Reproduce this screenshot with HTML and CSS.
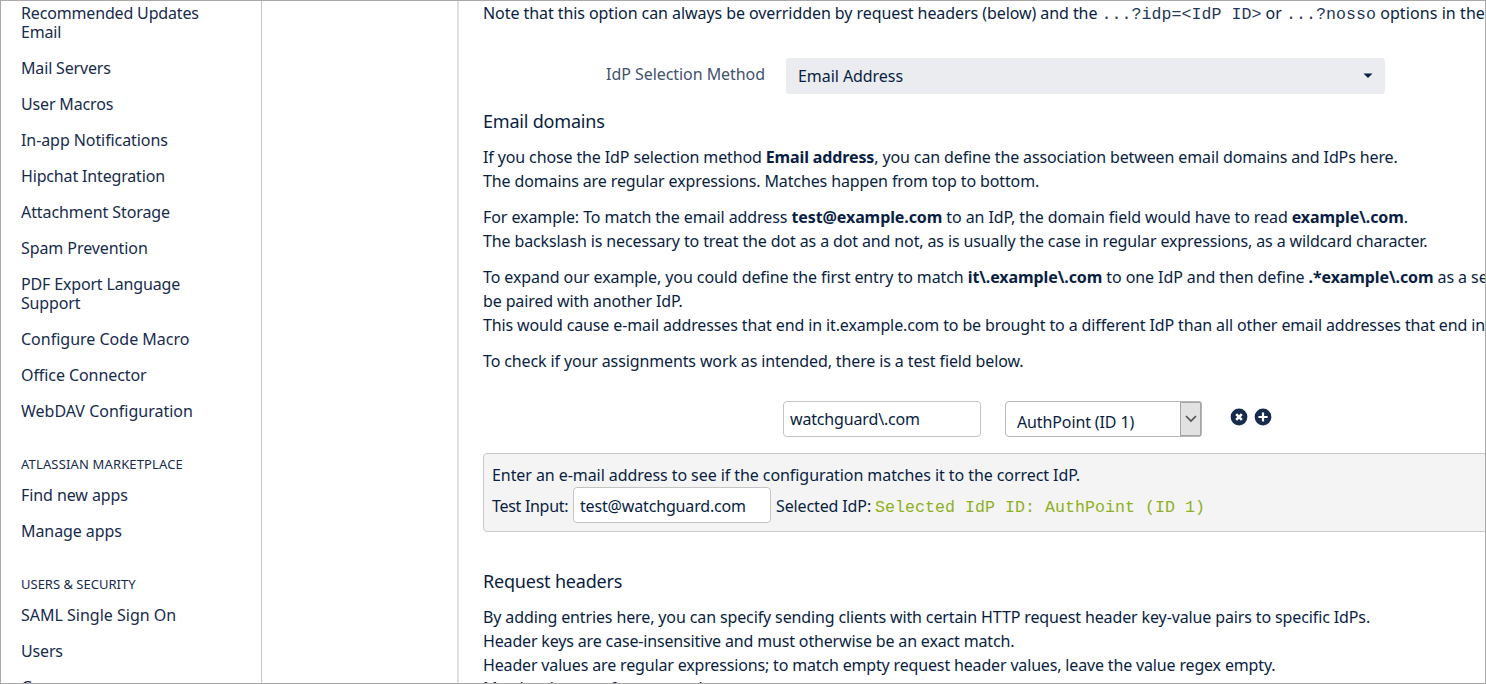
FILE: index.html
```html
<!DOCTYPE html>
<html lang="en">
<head>
<meta charset="utf-8">
<title>SAML Single Sign On</title>
<link rel="stylesheet" href="styles.css">
</head>
<body>
<div class="frame">
  <nav class="sidebar">
    <ul class="nav-list">
      <li class="tight">Recommended Updates<br>Email</li>
      <li class="tight">Mail Servers</li>
      <li class="tight">User Macros</li>
      <li>In-app Notifications</li>
      <li class="tight">Hipchat Integration</li>
      <li>Attachment Storage</li>
      <li>Spam Prevention</li>
      <li class="tight">PDF Export Language<br>Support</li>
      <li class="normal">Configure Code Macro</li>
      <li>Office Connector</li>
      <li class="normal">WebDAV Configuration</li>
    </ul>
    <h4 class="nav-title wide">ATLASSIAN MARKETPLACE</h4>
    <ul class="nav-list">
      <li>Find new apps</li>
      <li>Manage apps</li>
    </ul>
    <h4 class="nav-title">USERS &amp; SECURITY</h4>
    <ul class="nav-list">
      <li class="normal">SAML Single Sign On</li>
      <li class="tight">Users</li>
      <li>Groups</li>
    </ul>
  </nav>
  <div class="gutter"></div>
  <main class="content">
    <p class="note">Note that this option can always be overridden by request headers (below) and the <code>...?idp=&lt;IdP ID&gt;</code> <span class="joiner">or</span> <code>...?nosso</code> <span class="joiner">options in the</span></p>
    <div class="field-row">
      <label class="field-label">IdP Selection Method</label>
      <div class="select"><span>Email Address</span><svg width="10" height="6" viewBox="0 0 10 6"><path d="M0.5 0.5h9L5 5z" fill="#091e42"/></svg></div>
    </div>
    <h3>Email domains</h3>
    <p>If you chose the IdP selection method <b>Email address</b>, you can define the association between email domains and IdPs here.<br>The domains are regular expressions. Matches happen from top to bottom.</p>
    <p><span class="loose">For example: To match the email address <b>test@example.com</b> to an IdP, the domain field would have to read <b>example\.com</b>.</span><br>The backslash is necessary to treat the dot as a dot and not, as is usually the case in regular expressions, as a wildcard character.</p>
    <p><span class="loose">To expand our example, you could define the first entry to match <b>it\.example\.com</b> to one IdP and then define <b>.*example\.com</b> as a second</span><br>be paired with another IdP.<br>This would cause e-mail addresses that end in it.example.com to be brought to a different IdP than all other email addresses that end in</p>
    <p>To check if your assignments work as intended, there is a test field below.</p>
    <div class="domain-row">
      <div class="input">watchguard\.com</div>
      <div class="native-select"><span>AuthPoint (ID 1)</span><div class="native-arrow"><svg width="12" height="8" viewBox="0 0 12 8"><path d="M1 1l5 5 5-5" fill="none" stroke="#505050" stroke-width="1.6"/></svg></div></div>
      <div class="actions">
        <svg width="18" height="18" viewBox="0 0 18 18"><circle cx="9" cy="9" r="8.4" fill="#172b4d"/><path d="M6.2 6.2l5.6 5.6M11.8 6.2l-5.6 5.6" stroke="#fff" stroke-width="2.6"/></svg>
        <svg width="18" height="18" viewBox="0 0 18 18"><circle cx="9" cy="9" r="8.4" fill="#172b4d"/><path d="M9 4.4v9.2M4.4 9h9.2" stroke="#fff" stroke-width="2.2"/></svg>
      </div>
    </div>
    <section class="test-box">
      <div class="test-hint">Enter an e-mail address to see if the configuration matches it to the correct IdP.</div>
      <div class="test-line"><span class="test-label">Test Input:</span><div class="input">test@watchguard.com</div><span class="test-result">Selected IdP:</span><code>Selected IdP ID: AuthPoint (ID 1)</code></div>
    </section>
    <h3>Request headers</h3>
    <p>By adding entries here, you can specify sending clients with certain HTTP request header key-value pairs to specific IdPs.<br><span class="tight">Header keys are case-insensitive and must otherwise be an exact match.</span><br><span class="tight">Header values are regular expressions; to match empty request header values, leave the value regex empty.</span><span class="last-line">Matches happen from top to bottom.</span></p>
  </main>
</div>
</body>
</html>
```
FILE: styles.css
```css
* { box-sizing: border-box; margin: 0; padding: 0; }
body {
  width: 1486px;
  height: 684px;
  overflow: hidden;
  background: #fff;
  color: #091e42;
  font: 16px/24px "Noto Sans", sans-serif;
  letter-spacing: -0.125px;
}
.frame {
  display: flex;
  width: 1486px;
  height: 684px;
  overflow: hidden;
  border: 1px solid #a9a9a9;
}
.sidebar { flex: none; width: 261px; padding: 3px 0 0 20px; border-right: 1px solid #c4c4c4; line-height: 19px; letter-spacing: -0.08px; color: #172b4d; }
.nav-list { list-style: none; display: flex; flex-direction: column; gap: 17px; }
.nav-title { height: 16px; margin: 35px 0 14px; font-size: 13px; line-height: 16px; font-weight: 400; letter-spacing: 0; }
.wide { letter-spacing: 0.15px; }
.normal { letter-spacing: 0; }
.loose { letter-spacing: -0.09px; }
.tight { letter-spacing: -0.16px; }
.gutter { flex: none; width: 197px; border-right: 2px solid #e0e0e0; }
.content { flex: none; width: 1100px; padding-left: 24px; white-space: nowrap; }
p { margin-bottom: 12px; }
b { font-weight: 700; }
code { font: 16.6px/20px "Liberation Mono", monospace; letter-spacing: 0.04px; color: #253858; }
.note { letter-spacing: -0.07px; }
.joiner { letter-spacing: 0.08px; }
h3 { font-size: 18px; line-height: 24px; font-weight: 400; letter-spacing: -0.2px; margin-bottom: 12px; }
.field-row { display: flex; margin: 33px 0 15px; height: 36px; letter-spacing: -0.06px; }
.field-label { width: 282px; margin-right: 21px; text-align: right; line-height: 32px; color: #42526e; }
.select { display: flex; align-items: center; justify-content: space-between; width: 599px; padding: 0 12px; border-radius: 3px; background: #ebecf0; }
.domain-row { display: flex; margin: 28px 0 16px 300px; height: 36px; }
.input { width: 198px; height: 36px; padding: 0 6px; border: 1px solid #c4c4c4; border-radius: 4px; background: #fff; line-height: 35px; letter-spacing: -0.16px; }
.native-select { display: flex; justify-content: space-between; width: 197px; margin-left: 24px; padding-left: 11px; border: 1px solid #b8b8b8; border-radius: 4px 3px 3px 4px; line-height: 40px; }
.native-arrow { display: flex; align-items: center; justify-content: center; width: 21px; border: 1px solid #a5a5a5; background: #e2e2e2; }
.actions { display: flex; gap: 6px; padding: 7px 0 0 27.5px; }
.test-box { height: 79px; margin-bottom: 37px; padding: 9px 8px; border: 1px solid #c9c9c9; border-radius: 4px; background: #f4f4f4; }
.test-hint { letter-spacing: -0.07px; }
.test-line { display: flex; line-height: 39px; }
.test-line .input { line-height: 36px; }
.test-label { width: 81px; letter-spacing: -0.3px; }
.test-result { width: 104px; padding-left: 5px; }
.test-line code { line-height: 42px; color: #8eb021; }
.last-line { display: block; margin-top: -1px; }
```
